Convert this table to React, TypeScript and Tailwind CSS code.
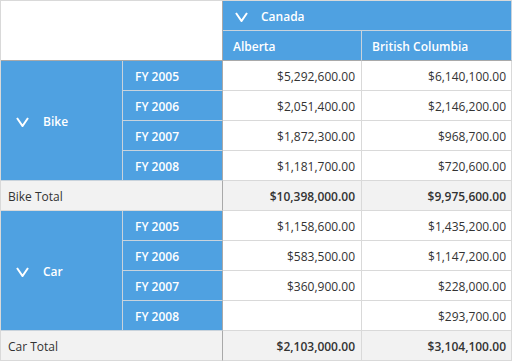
const cell = "border-r border-b border-[#d9d9d9] flex items-center";
const blueCell = "bg-[#4fa1e1] text-white font-semibold border-r border-b border-[#c9d3dc] flex items-center";

interface Row {
    year: string;
    alberta: string;
    bc: string;
}

const bikeRows: Row[] = [
    { year: "FY 2005", alberta: "$5,292,600.00", bc: "$6,140,100.00" },
    { year: "FY 2006", alberta: "$2,051,400.00", bc: "$2,146,200.00" },
    { year: "FY 2007", alberta: "$1,872,300.00", bc: "$968,700.00" },
    { year: "FY 2008", alberta: "$1,181,700.00", bc: "$720,600.00" },
];

const carRows: Row[] = [
    { year: "FY 2005", alberta: "$1,158,600.00", bc: "$1,435,200.00" },
    { year: "FY 2006", alberta: "$583,500.00", bc: "$1,147,200.00" },
    { year: "FY 2007", alberta: "$360,900.00", bc: "$228,000.00" },
    { year: "FY 2008", alberta: "", bc: "$293,700.00" },
];

function Chevron() {
    return (
        <svg width="13" height="10" viewBox="0 0 13 10" className="shrink-0">
            <polyline points="1,1 6.5,9 12,1" fill="none" stroke="white" strokeWidth="2" />
        </svg>
    );
}

function Group({ name, rows, total }: { name: string; rows: Row[]; total: [string, string] }) {
    return (
        <>
            <div className={`${blueCell} row-span-4 pl-[15px] gap-[14px] pt-[2px]`}>
                <Chevron />
                <span>{name}</span>
            </div>
            {rows.map((r) => (
                <div key={r.year} className="contents">
                    <div className={`${blueCell} border-r-[#a9a9a9] pl-3 pt-[2px]`}>{r.year}</div>
                    <div className={`${cell} justify-end pr-[6px] pt-[2px]`}>{r.alberta}</div>
                    <div className={`${cell} justify-end pr-[5px] pt-[2px]`}>{r.bc}</div>
                </div>
            ))}
            <div className={`${cell} col-span-2 bg-[#f2f2f2] border-r-[#a9a9a9] pl-[7px] pt-[2px]`}>{name} Total</div>
            <div className={`${cell} bg-[#f2f2f2] justify-end pr-[6px] font-semibold pt-[2px]`}>{total[0]}</div>
            <div className={`${cell} bg-[#f2f2f2] justify-end pr-[5px] font-semibold pt-[2px]`}>{total[1]}</div>
        </>
    );
}

export default function App() {
    return (
        <div
            className="w-[512px] h-[361px] bg-white text-[12px] text-[#333333] border-t border-l border-[#d9d9d9] grid grid-cols-[122px_100px_139px_150px] grid-rows-[repeat(12,30px)]"
            style={{ fontFamily: '"Open Sans", "Noto Sans", sans-serif' }}
        >
            <div className="col-span-2 row-span-2 bg-white border-r border-b border-r-[#a9a9a9] border-b-[#a9a9a9]" />
            <div className={`${blueCell} col-span-2 pl-3 gap-[13px] pt-[2px]`}>
                <Chevron />
                <span>Canada</span>
            </div>
            <div className={`${blueCell} border-b-[#a9a9a9] pl-[10px] pt-[2px]`}>Alberta</div>
            <div className={`${blueCell} border-b-[#a9a9a9] pl-[10px] pt-[2px]`}>British Columbia</div>

            <Group name="Bike" rows={bikeRows} total={["$10,398,000.00", "$9,975,600.00"]} />
            <Group name="Car" rows={carRows} total={["$2,103,000.00", "$3,104,100.00"]} />
        </div>
    );
}
